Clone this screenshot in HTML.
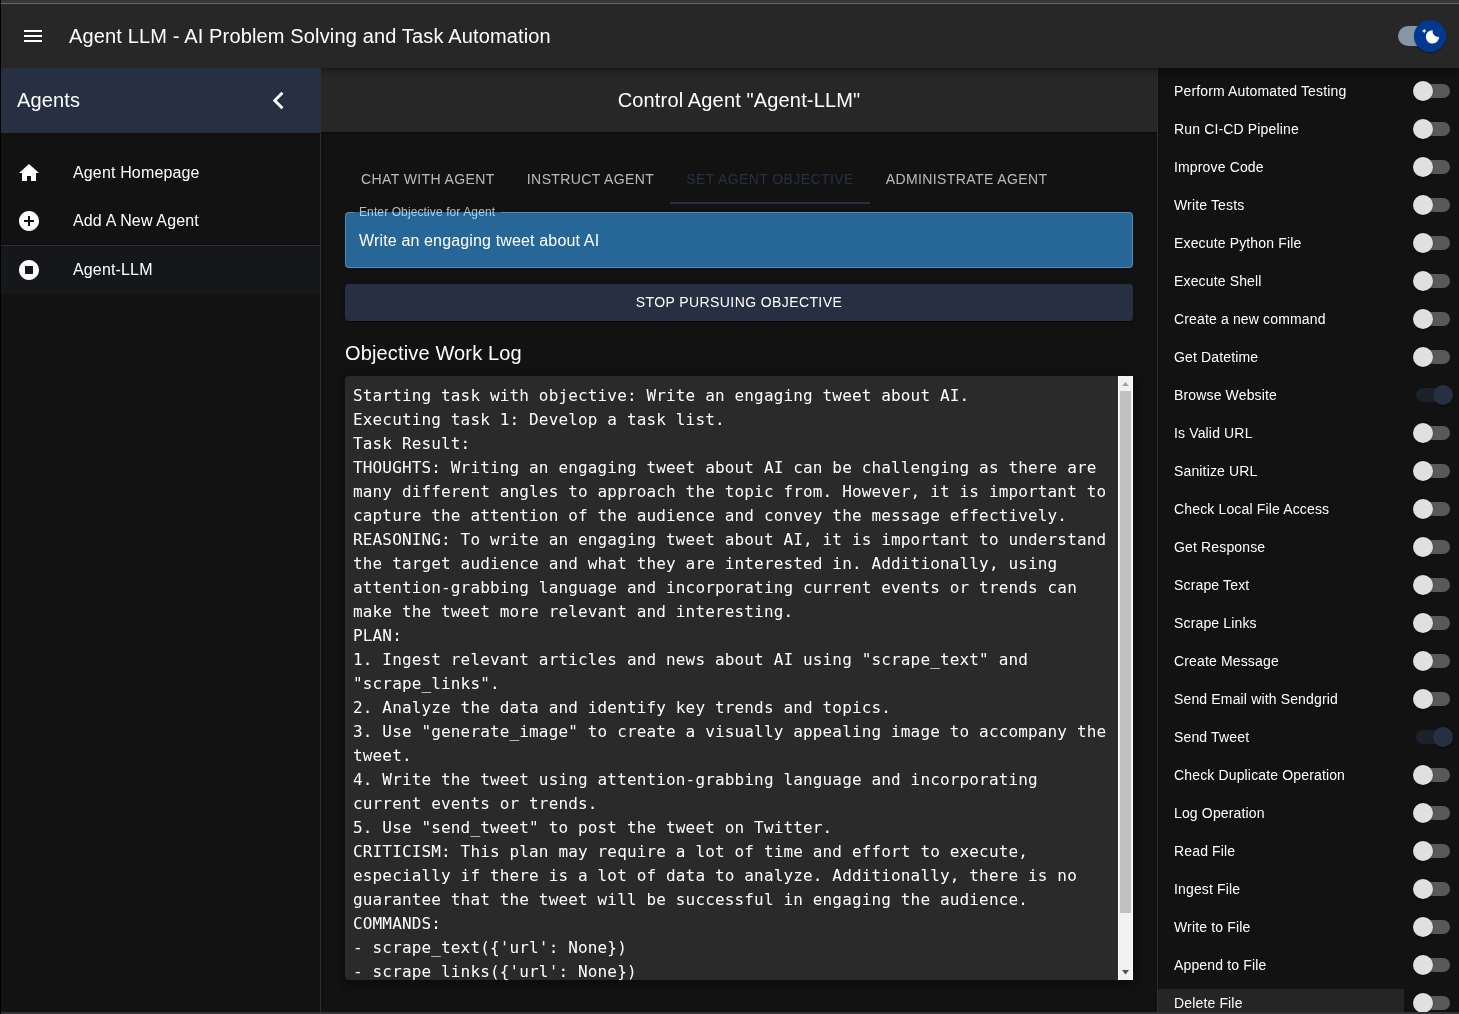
<!DOCTYPE html><html><head><meta charset="utf-8"><title>Agent LLM</title><style>
*{box-sizing:border-box;margin:0;padding:0}
html,body{width:1459px;height:1014px;overflow:hidden;background:#121212;color:#fff;font-family:"Liberation Sans",sans-serif;}
.abs{position:absolute}
#root{position:absolute;left:0;top:0;width:1459px;height:1014px;overflow:hidden;background:#121212;will-change:transform}
#topstrip{left:0;top:0;width:1459px;height:3px;background:#363636;z-index:30}
#topline{left:0;top:3px;width:1459px;height:1px;background:#666;z-index:30}
#leftstrip{left:0;top:0;width:1px;height:1014px;background:#000;z-index:51}
#botstrip{left:0;top:1012px;width:1459px;height:2px;background:#333;z-index:50}
#appbar{left:1px;top:4px;width:1458px;height:64px;background:#272727;box-shadow:0 2px 4px -1px rgba(0,0,0,.2),0 4px 5px 0 rgba(0,0,0,.14),0 1px 10px 0 rgba(0,0,0,.12);z-index:20}
#title{left:68px;top:16px;height:32px;line-height:32px;font-size:20px;letter-spacing:0.15px;white-space:nowrap}
#drawerhead{left:1px;top:68px;width:319px;height:64px;background:#273043;z-index:25}
#drawerborder{left:320px;top:68px;width:1px;height:946px;background:#2e2e2e;z-index:25}
#agents{left:16px;top:16px;height:32px;line-height:32px;font-size:20px;letter-spacing:0.15px}
.li{left:1px;width:319px;height:48px}
.li .txt{position:absolute;left:72px;top:12px;height:24px;line-height:24px;font-size:16px;letter-spacing:0.15px;white-space:nowrap}
.li svg{position:absolute;left:16px;top:12px;width:24px;height:24px;fill:#fff}
#mainhead{left:321px;top:68px;width:836px;height:64px;background:#272727;z-index:4;text-align:center;font-size:20px;line-height:64px;letter-spacing:0.15px;box-shadow:0 2px 1px -1px rgba(0,0,0,.2),0 1px 1px 0 rgba(0,0,0,.14),0 1px 3px 0 rgba(0,0,0,.12)}
#tabs{left:345px;top:155px;height:48px;display:flex}
.tab{position:relative;height:48px;line-height:48px;font-size:14px;letter-spacing:0.02857em;color:rgba(255,255,255,.7);white-space:nowrap;padding:0 16px}
.tab.sel{color:#273043}
.ind{position:absolute;left:0;right:0;bottom:-1px;height:2px;background:#273043}
#field{left:345px;top:212px;width:788px;height:56px;background:#266798;border-radius:4px}
#fieldset{left:345px;top:212px;width:788px;height:56px;border:1px solid rgba(255,255,255,.23);border-radius:4px}
.flabel{left:0;height:18px;line-height:18px;font-size:12px;letter-spacing:0.11px;color:rgba(255,255,255,.7);white-space:nowrap}
#fval{left:359px;top:229px;height:24px;line-height:24px;font-size:16px;letter-spacing:0.15px;white-space:nowrap}
#btn{left:345px;top:284px;width:788px;height:37px;background:#273043;border-radius:4px;text-align:center;line-height:37px;font-size:14px;letter-spacing:0.4px;box-shadow:0 3px 1px -2px rgba(0,0,0,.2),0 2px 2px 0 rgba(0,0,0,.14),0 1px 5px 0 rgba(0,0,0,.12)}
#owl{left:345px;top:337px;height:32px;line-height:32px;font-size:20px;letter-spacing:0.15px;white-space:nowrap}
#log{left:345px;top:376px;width:788px;height:604px;background:#2a2a2a;border-radius:4px;box-shadow:0 3px 5px -1px rgba(0,0,0,.2),0 5px 8px 0 rgba(0,0,0,.14),0 1px 14px 0 rgba(0,0,0,.12)}
#logclip{left:0;top:0;width:773px;height:604px;overflow:hidden}
#logtxt{position:absolute;left:8px;top:8px;font-family:"DejaVu Sans Mono","Liberation Mono",monospace;font-size:16px;line-height:24px;letter-spacing:0.15px;white-space:pre;color:#fff}
#sb{left:773px;top:0;width:15px;height:604px;background:#f1f1f1;border-left:1px solid #fff;border-right:1px solid #fff}
#sbthumb{left:1px;top:15px;width:11px;height:522px;background:#c1c1c1}
#rightborder{left:1157px;top:68px;width:1px;height:946px;background:#2e2e2e;z-index:6}
.row{left:1158px;width:301px;height:38px}
.row .lbl{position:absolute;left:16px;top:0;height:38px;line-height:38px;font-size:14px;letter-spacing:0.15px;white-space:nowrap;color:#fff}
.sw{position:absolute;left:246px;top:0;width:58px;height:38px}
.sw .track{position:absolute;left:12px;top:12px;width:34px;height:14px;border-radius:7px;background:#595959}
.sw .thumb{position:absolute;left:9px;top:9px;width:20px;height:20px;border-radius:50%;background:#e0e0e0;box-shadow:0 2px 1px -1px rgba(0,0,0,.2),0 1px 1px 0 rgba(0,0,0,.14),0 1px 3px 0 rgba(0,0,0,.12)}
.sw.on .track{background:#1c212a}
.sw.on .thumb{left:29px;background:#273043}
</style></head><body><div id="root">
<div class="abs" id="topstrip"></div><div class="abs" id="topline"></div><div class="abs" id="leftstrip"></div><div class="abs" id="botstrip"></div>
<div class="abs" id="appbar">
<svg class="abs" style="left:20px;top:20px;width:24px;height:24px;fill:#fff" viewBox="0 0 24 24"><path d="M3 18h18v-2H3v2zm0-5h18v-2H3v2zm0-7v2h18V6H3z"/></svg>
<div class="abs" id="title">Agent LLM - AI Problem Solving and Task Automation</div>
<div class="abs" style="left:1397px;top:22px;width:48px;height:20px;border-radius:10px;background:#8796A5"></div>
<div class="abs" style="left:1413px;top:16px;width:32px;height:32px;border-radius:50%;background:#003892;box-shadow:0 2px 1px -1px rgba(0,0,0,.2),0 1px 1px 0 rgba(0,0,0,.14),0 1px 3px 0 rgba(0,0,0,.12)"><svg style="position:absolute;left:6px;top:6px;width:20px;height:20px" viewBox="0 0 20 20"><path fill="#fff" d="M4.2 2.5l-.7 1.8-1.8.7 1.8.7.7 1.8.6-1.8L6.7 5l-1.9-.7-.6-1.8zm15 8.3a6.7 6.7 0 11-6.6-6.6 5.8 5.8 0 006.6 6.6z"/></svg></div>
</div>
<div class="abs" id="drawerhead"><div class="abs" id="agents">Agents</div><svg class="abs" style="left:260px;top:15px;width:35px;height:35px;fill:#fff" viewBox="0 0 24 24"><path d="M15.41 7.41 14 6l-6 6 6 6 1.41-1.41L10.83 12z"/></svg></div>
<div class="abs" id="drawerborder"></div><div class="abs" style="left:1px;top:132px;width:319px;height:1px;background:#2e2e2e"></div>
<div class="abs li" style="top:149px"><svg viewBox="0 0 24 24"><path d="M10 20v-5h4v5h5v-8h3L12 3 2 12h3v8z"/></svg><div class="txt">Agent Homepage</div></div>
<div class="abs li" style="top:197px"><svg viewBox="0 0 24 24"><path d="M12 2C6.48 2 2 6.48 2 12s4.48 10 10 10 10-4.48 10-10S17.52 2 12 2zm5 11h-4v4h-2v-4H7v-2h4V7h2v4h4v2z"/></svg><div class="txt">Add A New Agent</div></div>
<div class="abs" style="left:1px;top:245px;width:319px;height:1px;background:#2e2e2e"></div>
<div class="abs li" style="top:246px;background:#15171a"><svg viewBox="0 0 24 24"><path d="M12 2C6.48 2 2 6.48 2 12s4.48 10 10 10 10-4.48 10-10S17.52 2 12 2zm4 14H8V8h8v8z"/></svg><div class="txt">Agent-LLM</div></div>
<div class="abs" id="mainhead">Control Agent "Agent-LLM"</div>
<div class="abs" id="tabs"><div class="tab">CHAT WITH AGENT</div><div class="tab">INSTRUCT AGENT</div><div class="tab sel">SET AGENT OBJECTIVE<span class="ind"></span></div><div class="tab">ADMINISTRATE AGENT</div></div>
<div class="abs" id="field"></div><div class="abs" id="fieldset"></div>
<div class="abs" style="left:354px;top:212px;width:147px;height:1px;background:#266798"></div>
<div class="abs" style="left:359px;top:203px;width:160px;height:9px;overflow:hidden"><div class="abs flabel" style="top:0">Enter Objective for Agent</div></div>
<div class="abs" style="left:359px;top:212px;width:160px;height:9px;overflow:hidden"><div class="abs flabel" style="top:-9px;color:#a6d3f7">Enter Objective for Agent</div></div>
<div class="abs" id="fval">Write an engaging tweet about AI</div>
<div class="abs" id="btn">STOP PURSUING OBJECTIVE</div>
<div class="abs" id="owl">Objective Work Log</div>
<div class="abs" id="log"><div class="abs" id="logclip"><div id="logtxt">Starting task with objective: Write an engaging tweet about AI.
Executing task 1: Develop a task list.
Task Result:
THOUGHTS: Writing an engaging tweet about AI can be challenging as there are
many different angles to approach the topic from. However, it is important to
capture the attention of the audience and convey the message effectively.
REASONING: To write an engaging tweet about AI, it is important to understand
the target audience and what they are interested in. Additionally, using
attention-grabbing language and incorporating current events or trends can
make the tweet more relevant and interesting.
PLAN:
1. Ingest relevant articles and news about AI using "scrape_text" and
"scrape_links".
2. Analyze the data and identify key trends and topics.
3. Use "generate_image" to create a visually appealing image to accompany the
tweet.
4. Write the tweet using attention-grabbing language and incorporating
current events or trends.
5. Use "send_tweet" to post the tweet on Twitter.
CRITICISM: This plan may require a lot of time and effort to execute,
especially if there is a lot of data to analyze. Additionally, there is no
guarantee that the tweet will be successful in engaging the audience.
COMMANDS:
- scrape_text({'url': None})
- scrape_links({'url': None})
- generate_image({'prompt': None})</div></div><div class="abs" id="sb"><div class="abs" id="sbthumb"></div>
<svg class="abs" style="left:0;top:0;width:13px;height:15px" viewBox="0 0 13 15"><path d="M3 10 L6.5 6 L10 10 Z" fill="#a3a3a3"/></svg>
<svg class="abs" style="left:0;top:589px;width:13px;height:15px" viewBox="0 0 13 15"><path d="M3 5 L10 5 L6.5 9.5 Z" fill="#505050"/></svg>
</div></div>
<div class="abs" id="rightborder"></div>
<div class="abs row" style="top:72px"><div class="lbl">Perform Automated Testing</div><div class="sw"><div class="track"></div><div class="thumb"></div></div></div>
<div class="abs row" style="top:110px"><div class="lbl">Run CI-CD Pipeline</div><div class="sw"><div class="track"></div><div class="thumb"></div></div></div>
<div class="abs row" style="top:148px"><div class="lbl">Improve Code</div><div class="sw"><div class="track"></div><div class="thumb"></div></div></div>
<div class="abs row" style="top:186px"><div class="lbl">Write Tests</div><div class="sw"><div class="track"></div><div class="thumb"></div></div></div>
<div class="abs row" style="top:224px"><div class="lbl">Execute Python File</div><div class="sw"><div class="track"></div><div class="thumb"></div></div></div>
<div class="abs row" style="top:262px"><div class="lbl">Execute Shell</div><div class="sw"><div class="track"></div><div class="thumb"></div></div></div>
<div class="abs row" style="top:300px"><div class="lbl">Create a new command</div><div class="sw"><div class="track"></div><div class="thumb"></div></div></div>
<div class="abs row" style="top:338px"><div class="lbl">Get Datetime</div><div class="sw"><div class="track"></div><div class="thumb"></div></div></div>
<div class="abs row" style="top:376px"><div class="lbl">Browse Website</div><div class="sw on"><div class="track"></div><div class="thumb"></div></div></div>
<div class="abs row" style="top:414px"><div class="lbl">Is Valid URL</div><div class="sw"><div class="track"></div><div class="thumb"></div></div></div>
<div class="abs row" style="top:452px"><div class="lbl">Sanitize URL</div><div class="sw"><div class="track"></div><div class="thumb"></div></div></div>
<div class="abs row" style="top:490px"><div class="lbl">Check Local File Access</div><div class="sw"><div class="track"></div><div class="thumb"></div></div></div>
<div class="abs row" style="top:528px"><div class="lbl">Get Response</div><div class="sw"><div class="track"></div><div class="thumb"></div></div></div>
<div class="abs row" style="top:566px"><div class="lbl">Scrape Text</div><div class="sw"><div class="track"></div><div class="thumb"></div></div></div>
<div class="abs row" style="top:604px"><div class="lbl">Scrape Links</div><div class="sw"><div class="track"></div><div class="thumb"></div></div></div>
<div class="abs row" style="top:642px"><div class="lbl">Create Message</div><div class="sw"><div class="track"></div><div class="thumb"></div></div></div>
<div class="abs row" style="top:680px"><div class="lbl">Send Email with Sendgrid</div><div class="sw"><div class="track"></div><div class="thumb"></div></div></div>
<div class="abs row" style="top:718px"><div class="lbl">Send Tweet</div><div class="sw on"><div class="track"></div><div class="thumb"></div></div></div>
<div class="abs row" style="top:756px"><div class="lbl">Check Duplicate Operation</div><div class="sw"><div class="track"></div><div class="thumb"></div></div></div>
<div class="abs row" style="top:794px"><div class="lbl">Log Operation</div><div class="sw"><div class="track"></div><div class="thumb"></div></div></div>
<div class="abs row" style="top:832px"><div class="lbl">Read File</div><div class="sw"><div class="track"></div><div class="thumb"></div></div></div>
<div class="abs row" style="top:870px"><div class="lbl">Ingest File</div><div class="sw"><div class="track"></div><div class="thumb"></div></div></div>
<div class="abs row" style="top:908px"><div class="lbl">Write to File</div><div class="sw"><div class="track"></div><div class="thumb"></div></div></div>
<div class="abs row" style="top:946px"><div class="lbl">Append to File</div><div class="sw"><div class="track"></div><div class="thumb"></div></div></div>
<div class="abs row" style="top:984px"><div class="abs" style="left:0;top:5px;width:246px;height:28px;background:#252525"></div><div class="lbl">Delete File</div><div class="sw"><div class="track"></div><div class="thumb"></div></div></div>
</div></body></html>
